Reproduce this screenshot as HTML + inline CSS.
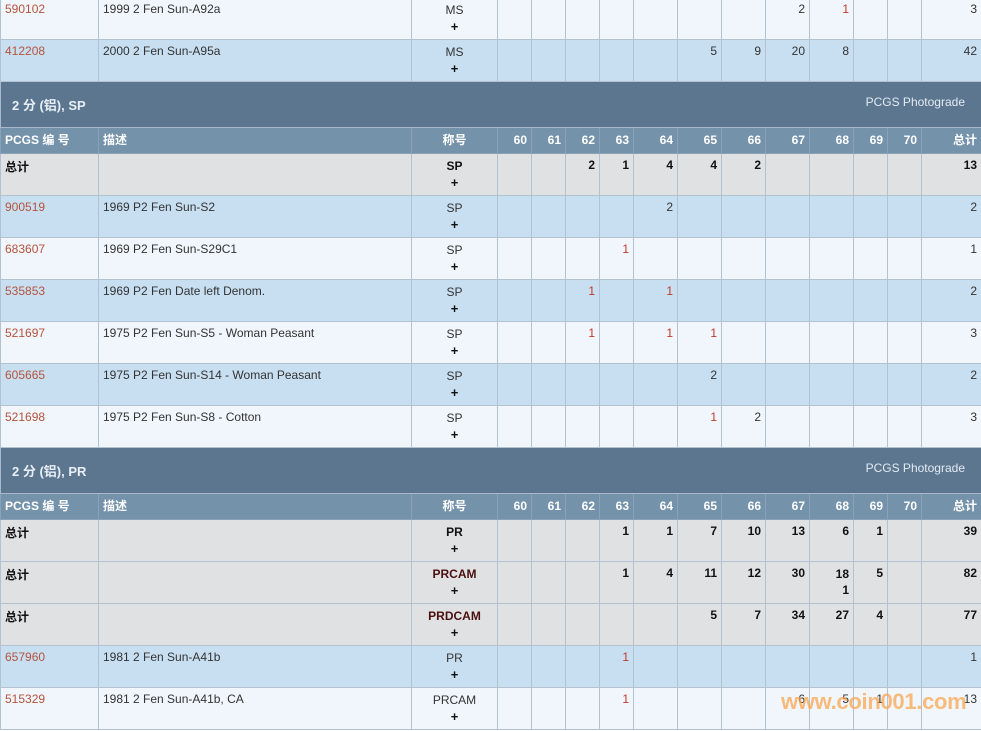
<!DOCTYPE html>
<html><head><meta charset="utf-8"><style>
body{margin:0;background:#fff;width:981px;height:731px;overflow:hidden;position:relative;font-family:"Liberation Sans","Noto Sans CJK SC",sans-serif;}
table{position:absolute;left:0;top:-3px;border-collapse:collapse;table-layout:fixed;width:981px;font-size:12px;}
td{border:1px solid #b3c2d1;vertical-align:top;padding:4px 4px 0 4px;height:37px;color:#333;white-space:nowrap;overflow:visible;}
tr.w td{background:#f0f6fb}
tr.b td{background:#c8dff2}
tr.t td{background:#e0e1e3;font-weight:bold;color:#111}
tr.h td{background:#5c7690;height:45px;padding:0 11px;vertical-align:middle;color:#e8eff6;font-weight:bold;font-size:13px;border-color:#a9b9c9}
tr.h span{float:right;font-weight:normal;font-size:12px;color:#e2eaf2;margin-right:5px}
tr.th td{background:#7592ab;color:#fff;font-weight:bold;height:20px;padding:5px 4px 0 4px;border-color:#8aa2b8;line-height:15px}
td.n{text-align:right}
td.g{text-align:center}
a{color:#b5533c;text-decoration:none}
.r{color:#c0392b}
.p{display:block;font-weight:bold;font-size:13px;line-height:18px;color:#111}
.g{line-height:16px}
.dr{color:#4a1010}
.wm{position:absolute;left:781px;top:689px;font:bold 22px "Liberation Sans",sans-serif;color:rgba(250,165,80,0.75);letter-spacing:-0.3px}
</style></head><body>
<table>
<colgroup><col style="width:98px"><col style="width:313px"><col style="width:86px"><col style="width:34px"><col style="width:34px"><col style="width:34px"><col style="width:34px"><col style="width:44px"><col style="width:44px"><col style="width:44px"><col style="width:44px"><col style="width:44px"><col style="width:34px"><col style="width:34px"><col style="width:60px"></colgroup>
<tr class="w"><td><a>590102</a></td><td>1999 2 Fen Sun-A92a</td><td class="g">MS<span class="p">+</span></td><td></td><td></td><td></td><td></td><td></td><td></td><td></td><td class="n">2</td><td class="n r">1</td><td></td><td></td><td class="n">3</td></tr>
<tr class="b"><td><a>412208</a></td><td>2000 2 Fen Sun-A95a</td><td class="g">MS<span class="p">+</span></td><td></td><td></td><td></td><td></td><td></td><td class="n">5</td><td class="n">9</td><td class="n">20</td><td class="n">8</td><td></td><td></td><td class="n">42</td></tr>
<tr class="h"><td colspan="15">2 分 (铝), SP<span>PCGS Photograde</span></td></tr>
<tr class="th"><td>PCGS 编 号</td><td>描述</td><td class="g">称号</td><td class="n">60</td><td class="n">61</td><td class="n">62</td><td class="n">63</td><td class="n">64</td><td class="n">65</td><td class="n">66</td><td class="n">67</td><td class="n">68</td><td class="n">69</td><td class="n">70</td><td class="n">总计</td></tr>
<tr class="t"><td>总计</td><td></td><td class="g">SP<span class="p">+</span></td><td></td><td></td><td class="n">2</td><td class="n">1</td><td class="n">4</td><td class="n">4</td><td class="n">2</td><td></td><td></td><td></td><td></td><td class="n">13</td></tr>
<tr class="b"><td><a>900519</a></td><td>1969 P2 Fen Sun-S2</td><td class="g">SP<span class="p">+</span></td><td></td><td></td><td></td><td></td><td class="n">2</td><td></td><td></td><td></td><td></td><td></td><td></td><td class="n">2</td></tr>
<tr class="w"><td><a>683607</a></td><td>1969 P2 Fen Sun-S29C1</td><td class="g">SP<span class="p">+</span></td><td></td><td></td><td></td><td class="n r">1</td><td></td><td></td><td></td><td></td><td></td><td></td><td></td><td class="n">1</td></tr>
<tr class="b"><td><a>535853</a></td><td>1969 P2 Fen Date left Denom.</td><td class="g">SP<span class="p">+</span></td><td></td><td></td><td class="n r">1</td><td></td><td class="n r">1</td><td></td><td></td><td></td><td></td><td></td><td></td><td class="n">2</td></tr>
<tr class="w"><td><a>521697</a></td><td>1975 P2 Fen Sun-S5 - Woman Peasant</td><td class="g">SP<span class="p">+</span></td><td></td><td></td><td class="n r">1</td><td></td><td class="n r">1</td><td class="n r">1</td><td></td><td></td><td></td><td></td><td></td><td class="n">3</td></tr>
<tr class="b"><td><a>605665</a></td><td>1975 P2 Fen Sun-S14 - Woman Peasant</td><td class="g">SP<span class="p">+</span></td><td></td><td></td><td></td><td></td><td></td><td class="n">2</td><td></td><td></td><td></td><td></td><td></td><td class="n">2</td></tr>
<tr class="w"><td><a>521698</a></td><td>1975 P2 Fen Sun-S8 - Cotton</td><td class="g">SP<span class="p">+</span></td><td></td><td></td><td></td><td></td><td></td><td class="n r">1</td><td class="n">2</td><td></td><td></td><td></td><td></td><td class="n">3</td></tr>
<tr class="h"><td colspan="15">2 分 (铝), PR<span>PCGS Photograde</span></td></tr>
<tr class="th"><td>PCGS 编 号</td><td>描述</td><td class="g">称号</td><td class="n">60</td><td class="n">61</td><td class="n">62</td><td class="n">63</td><td class="n">64</td><td class="n">65</td><td class="n">66</td><td class="n">67</td><td class="n">68</td><td class="n">69</td><td class="n">70</td><td class="n">总计</td></tr>
<tr class="t"><td>总计</td><td></td><td class="g">PR<span class="p">+</span></td><td></td><td></td><td></td><td class="n">1</td><td class="n">1</td><td class="n">7</td><td class="n">10</td><td class="n">13</td><td class="n">6</td><td class="n">1</td><td></td><td class="n">39</td></tr>
<tr class="t"><td>总计</td><td></td><td class="g"><span class="dr">PRCAM</span><span class="p">+</span></td><td></td><td></td><td></td><td class="n">1</td><td class="n">4</td><td class="n">11</td><td class="n">12</td><td class="n">30</td><td class="n" style="line-height:16px">18<br>1</td><td class="n">5</td><td></td><td class="n">82</td></tr>
<tr class="t"><td>总计</td><td></td><td class="g"><span class="dr">PRDCAM</span><span class="p">+</span></td><td></td><td></td><td></td><td></td><td></td><td class="n">5</td><td class="n">7</td><td class="n">34</td><td class="n">27</td><td class="n">4</td><td></td><td class="n">77</td></tr>
<tr class="b"><td><a>657960</a></td><td>1981 2 Fen Sun-A41b</td><td class="g">PR<span class="p">+</span></td><td></td><td></td><td></td><td class="n r">1</td><td></td><td></td><td></td><td></td><td></td><td></td><td></td><td class="n">1</td></tr>
<tr class="w"><td><a>515329</a></td><td>1981 2 Fen Sun-A41b, CA</td><td class="g">PRCAM<span class="p">+</span></td><td></td><td></td><td></td><td class="n r">1</td><td></td><td></td><td></td><td class="n">6</td><td class="n">5</td><td class="n">1</td><td></td><td class="n">13</td></tr>
</table>
<div class="wm">www.coin001.com</div>
</body></html>
